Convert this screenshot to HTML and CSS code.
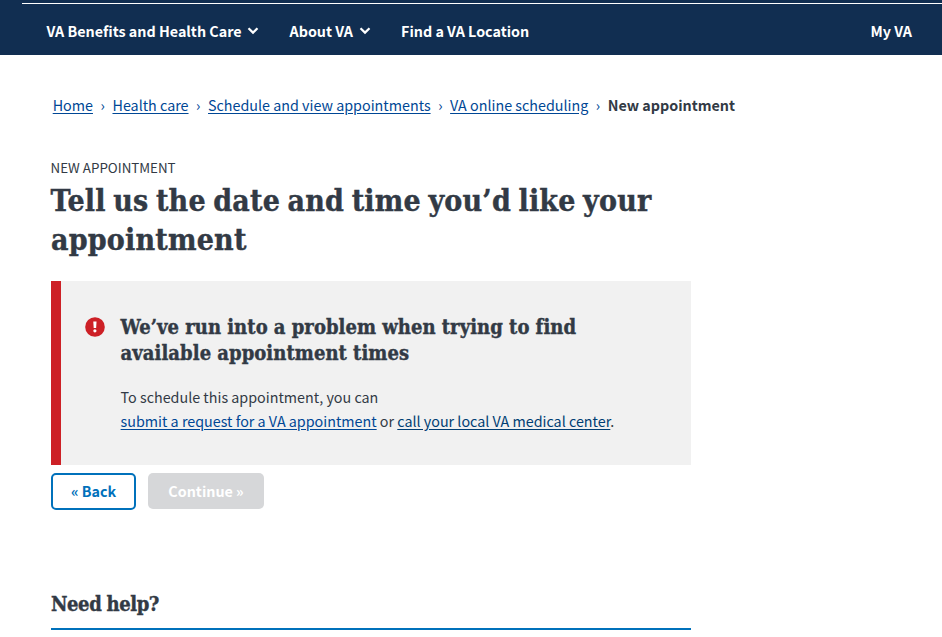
FILE: index.html
```html
<!DOCTYPE html>
<html lang="en">
<head>
<meta charset="utf-8">
<title>New appointment</title>
<link rel="stylesheet" href="styles.css">
</head>
<body>
<header class="site-header">
  <nav class="main-nav">
    <a class="nav-item" href="#">VA Benefits and Health Care<svg class="chevron" viewBox="0 0 12 9"><path d="M1.5 2.2 6 6.6 10.5 2.2"/></svg></a>
    <a class="nav-item" href="#">About VA<svg class="chevron" viewBox="0 0 12 9"><path d="M1.5 2.2 6 6.6 10.5 2.2"/></svg></a>
    <a class="nav-item" href="#">Find a VA Location</a>
    <a class="nav-item my-va" href="#">My VA</a>
  </nav>
</header>
<nav class="breadcrumbs">
  <a href="#">Home</a><span class="sep">›</span>
  <a href="#">Health care</a><span class="sep">›</span>
  <a href="#">Schedule and view appointments</a><span class="sep">›</span>
  <a href="#">VA online scheduling</a><span class="sep">›</span>
  <strong>New appointment</strong>
</nav>
<main class="content">
  <p class="eyebrow">NEW APPOINTMENT</p>
  <h1>Tell us the date and time you’d like your<br>appointment</h1>
  <section class="alert">
    <svg class="alert-icon" viewBox="0 0 20 20"><circle cx="10" cy="10" r="9.8"/><path d="M8.3 4.6h3.2l-.4 6.4H8.7z"/><circle class="dot" cx="9.9" cy="13.8" r="1.6"/></svg>
    <div class="alert-body">
      <h2>We’ve run into a problem when trying to find<br>available appointment times</h2>
      <p>To schedule this appointment, you can<br><a href="#">submit a request for a VA appointment</a> or <a class="call" href="#">call your local VA medical center</a>.</p>
    </div>
  </section>
  <div class="actions">
    <button class="btn back">« Back</button>
    <button class="btn continue" disabled>Continue »</button>
  </div>
  <h2 class="help">Need help?</h2>
</main>
</body>
</html>
```

FILE: styles.css
```css
* { box-sizing: border-box; }

body {
  margin: 0;
  background: #fff;
  color: #323a45;
  font: 14.32px/24px "Noto Sans CJK SC", sans-serif;
  overflow: hidden;
}

a { color: #004795; text-underline-offset: 2px; }
p, h1, h2 { margin: 0; }

.site-header {
  height: 55px;
  padding: 3px 0 0 22px;
  background: #112e51;
}

.main-nav {
  display: flex;
  align-items: center;
  height: 52px;
  padding: 2px 30px 0 24.5px;
  border-top: 1px solid #fff;
}

.nav-item {
  display: flex;
  align-items: center;
  margin-right: 30.2px;
  color: #fff;
  font-weight: 700;
  text-decoration: none;
}

.my-va { margin: 0 0 0 auto; }

.chevron {
  width: 12px;
  height: 9px;
  margin-left: 5.8px;
  fill: none;
  stroke: #fff;
  stroke-width: 2.2;
}

.breadcrumbs {
  display: flex;
  padding: 38px 0 0 52.7px;
}

.sep {
  width: 19.5px;
  color: #004795;
  text-align: center;
}

.content { width: 640px; margin: 39px 0 0 51px; }

.eyebrow { font-size: 13.35px; text-indent: -0.4px; }

h1, h2 {
  font-family: "DejaVu Serif", serif;
  font-stretch: condensed;
  font-weight: 700;
  -webkit-text-stroke: 0.4px currentColor;
}

h1 {
  padding-top: 1px;
  font-size: 30px;
  line-height: 39px;
  letter-spacing: 0.2px;
  word-spacing: -2.1px;
  text-indent: -0.4px;
}

h2 {
  font-size: 20px;
  line-height: 26px;
  letter-spacing: 0.066px;
  word-spacing: -0.2px;
}

.alert {
  display: flex;
  height: 184px;
  margin-top: 22px;
  padding: 33px 0 0 23.6px;
  border-left: 10px solid #cd2026;
  background: #f1f1f1;
}

.alert-icon { width: 20px; height: 20px; margin: 3px 16px 0 0; fill: #cd2026; }
.alert-icon path, .alert-icon .dot { fill: #fff; }
.alert p { margin-top: 19px; }
.alert .call { color: #003e73; }

.actions { display: flex; gap: 12px; margin-top: 8px; }

.btn {
  height: 37px;
  padding: 0;
  border: 0;
  border-radius: 5px;
  font: inherit;
  font-weight: 700;
}

.back { width: 85px; padding-bottom: 1px; border: 2px solid #0071bb; background: #fff; color: #0071bb; }
.continue { width: 116px; height: 36px; background: #d6d7d9; color: #fff; }

.help {
  height: 39px;
  margin-top: 81px;
  border-bottom: 2px solid #0071bb;
  letter-spacing: -0.4px;
  word-spacing: -0.7px;
}
```
